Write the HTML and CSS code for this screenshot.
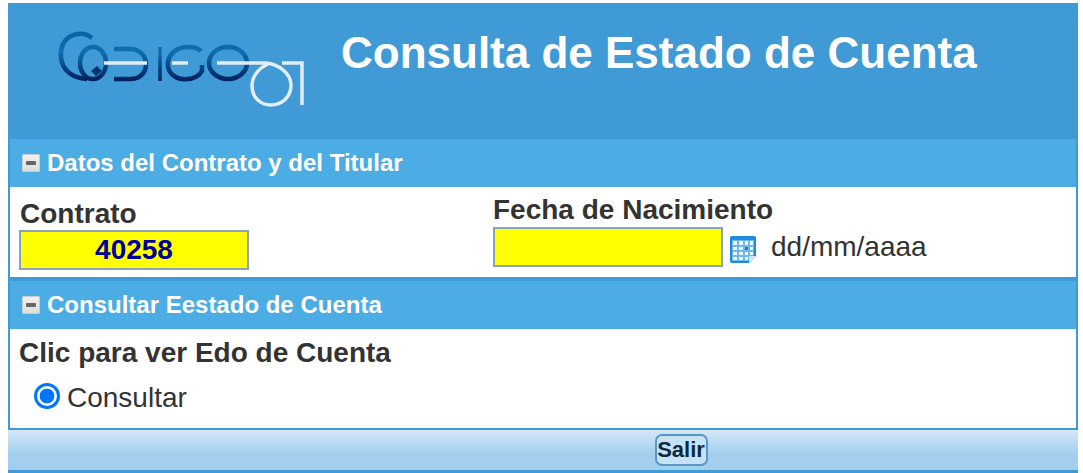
FILE: index.html
```html
<!DOCTYPE html>
<html lang="es">
<head>
<meta charset="utf-8">
<title>Consulta de Estado de Cuenta</title>
<link rel="stylesheet" href="styles.css">
</head>
<body>
<div class="page">
  <header class="banner">
    <svg class="logo" viewBox="0 0 260 90" width="260" height="90" aria-label="Codigo 01">
      <defs>
        <linearGradient id="lg" gradientUnits="userSpaceOnUse" x1="0" y1="8" x2="0" y2="56">
          <stop offset="0" stop-color="#08629f"/>
          <stop offset="0.4" stop-color="#0a6fb2"/>
          <stop offset="1" stop-color="#021f5c"/>
        </linearGradient>
        <filter id="soft" x="-5%" y="-5%" width="110%" height="110%">
          <feGaussianBlur stdDeviation="0.6"/>
        </filter>
      </defs>
      <g filter="url(#soft)">
        <g fill="none" stroke="url(#lg)" stroke-width="4.500">
          <path d="M42 13 C36 8 28 8 21 11 C13 15 10 24 11 32 C12 45 22 53 37 54"/>
          <ellipse cx="43" cy="38" rx="13" ry="16"/>
          <path d="M64 24 H80 C90 24 96 31 96 39 C96 48 90 54 80 54 H64"/>
          <path d="M110 22 V56" stroke-width="3.500"/>
          <path d="M151 26 C145 21 135 21 128 24 C120 28 117 35 118 41 C119 50 128 55 137 54 C144 54 150 50 152 46 V40"/>
          <ellipse cx="178" cy="38" rx="19" ry="16"/>
        </g>
        <path d="M41 46 l6 -5 l5 5 l-6 5 z" fill="#06346f"/>
        <g fill="none" stroke="#e3edf5" stroke-width="3.500">
          <path d="M54 38 H97 M122 38 H138 M167 38 H198"/>
          <path d="M198 38 H216 C228 39 241 48 241 60 C241 72 232 80 221 80 C210 80 202 72 202 61 C202 51 209 43 218 39"/>
          <path d="M232 38 H252 V80"/>
        </g>
      </g>
    </svg>
    <h1 class="title">Consulta de Estado de Cuenta</h1>
  </header>

  <section>
    <h2 class="section-head">
      <span class="toggle"><span class="toggle-bar"></span></span>
      Datos del Contrato y del Titular
    </h2>
    <div class="fields">
      <div class="field field-contract">
        <label class="field-label" for="contrato">Contrato</label>
        <input class="box box-value" id="contrato" type="text" value="40258">
      </div>
      <div class="field field-date">
        <label class="field-label" for="fecha">Fecha de Nacimiento</label>
        <div class="date-row">
          <input class="box" id="fecha" type="text">
          <svg class="cal" viewBox="0 0 28 28" width="28" height="28" aria-hidden="true">
            <path d="M2 3 Q2 1 4 1 H26 Q28 1 28 3 V21 L21 28 H4 Q2 28 2 26 Z" fill="#1f8ae0"/>
            <path d="M4 5 H26 V20 L20 26 H4 Z" fill="#6fb8ee"/>
            <path d="M21 28 V21 H28 Z" fill="#cfe7fa"/>
            <g fill="#f3faff">
              <rect x="5" y="6" width="4" height="4"/><rect x="11" y="6" width="4" height="4"/><rect x="17" y="6" width="3" height="4"/><rect x="22" y="6" width="3" height="4"/>
              <rect x="5" y="12" width="4" height="3"/><rect x="11" y="12" width="4" height="3"/><rect x="22" y="12" width="3" height="3"/>
              <rect x="5" y="17" width="4" height="3"/><rect x="11" y="17" width="4" height="3"/><rect x="17" y="17" width="3" height="3"/><rect x="22" y="17" width="3" height="3"/>
              <rect x="5" y="22" width="4" height="3"/><rect x="11" y="22" width="4" height="3"/><rect x="17" y="22" width="3" height="3"/>
            </g>
            <rect x="17" y="12" width="3" height="3" fill="#0f7fdc"/>
          </svg>
          <span class="hint">dd/mm/aaaa</span>
        </div>
      </div>
    </div>
  </section>

  <section>
    <h2 class="section-head">
      <span class="toggle"><span class="toggle-bar"></span></span>
      Consultar Eestado de Cuenta
    </h2>
    <div class="query">
      <p class="query-title">Clic para ver Edo de Cuenta</p>
      <label class="radio-row">
        <input class="radio" type="radio" name="accion" checked>
        <span>Consultar</span>
      </label>
    </div>
  </section>

  <footer class="bottom">
    <button class="exit" type="button">Salir</button>
  </footer>
</div>
</body>
</html>
```
FILE: styles.css
```css
* { box-sizing: border-box; }
html, body { height: 100%; }
body {
  margin: 0;
  padding: 3px 5px 0 8px;
  background: #fff;
  font-family: "Liberation Sans", Arial, sans-serif;
  color: #333;
  overflow: hidden;
}
.page {
  border-left: 2px solid #3f9ad6;
  border-right: 2px solid #3f9ad6;
  border-bottom: 3px solid #3f9ad6;
  height: 470px;
  display: flex;
  flex-direction: column;
}
.banner {
  height: 136px;
  background: #3f9ad6;
  margin: 0 -2px;
  display: flex;
  align-items: flex-start;
  flex: none;
}
.logo { margin: 22px 0 0 42px; flex: none; }
.title {
  margin: 25px 0 0 31px;
  font-size: 44px;
  line-height: 50px;
  font-weight: 700;
  color: #fff;
  white-space: nowrap;
}
.section-head {
  margin: 0;
  height: 48px;
  background: #4cade4;
  color: #fff;
  font-size: 24px;
  font-weight: 700;
  display: flex;
  align-items: center;
  gap: 7px;
  padding-left: 12px;
}
.toggle {
  width: 18px;
  height: 18px;
  background: linear-gradient(#f2f2f2, #dcdcdc);
  border: 1px solid #c4ced6;
  border-radius: 1px;
  display: flex;
  align-items: center;
  justify-content: center;
  flex: none;
}
.toggle-bar { width: 10px; height: 4px; background: #666; border-radius: 1px; }
.fields {
  height: 94px;
  border-bottom: 4px solid #3f9ad6;
  display: grid;
  grid-template-columns: 474px 1fr;
  padding-left: 9px;
}
.field { display: flex; flex-direction: column; align-items: flex-start; }
.field-contract { padding-top: 12px; }
.field-date { padding-top: 8px; }
.field-label {
  font-size: 28px;
  line-height: 29px;
  font-weight: 700;
  color: #333;
}
.field-contract .field-label { padding-left: 1px; margin-bottom: 2px; }
.field-date .field-label { margin-bottom: 3px; }
.box {
  width: 230px;
  height: 40px;
  border: 2px solid #8aa2bf;
  background: #ff0;
  padding: 0;
  margin: 0;
  font: 700 28px "Liberation Sans", Arial, sans-serif;
  color: #000099;
  text-align: center;
  outline: none;
  border-radius: 0;
}
.date-row { display: flex; align-items: center; }
.cal { margin: 4px 0 0 5px; flex: none; }
.hint { font-size: 28px; margin-left: 15px; color: #333; }
.query {
  height: 101px;
  border-bottom: 2px solid #3f9ad6;
  padding: 9px 0 0 9px;
}
.query-title {
  margin: 0;
  font-size: 28px;
  line-height: 30px;
  font-weight: 700;
  color: #333;
}
.radio-row {
  display: flex;
  align-items: center;
  margin: 14px 0 0 15px;
  font-size: 28px;
  gap: 7px;
}
.radio {
  appearance: none;
  width: 26px;
  height: 26px;
  margin: 0 0 4px;
  border: 3px solid #0075ff;
  border-radius: 50%;
  background: radial-gradient(circle, #0075ff 0 7px, #fff 7.700px);
}
.bottom {
  height: 40px;
  margin: 0 -2px;
  background: linear-gradient(#d4e8f7, #a2cfee 60%, #a2cfee);
  display: flex;
  justify-content: center;
  align-items: center;
  padding-left: 276px;
  flex: none;
}
.exit {
  width: 53px;
  height: 32px;
  padding: 0;
  border: 2px solid #5a97c8;
  border-radius: 7px;
  background: #c6e3f6;
  font: 700 22px "Liberation Sans", Arial, sans-serif;
  color: #0f2a3f;
}
```
